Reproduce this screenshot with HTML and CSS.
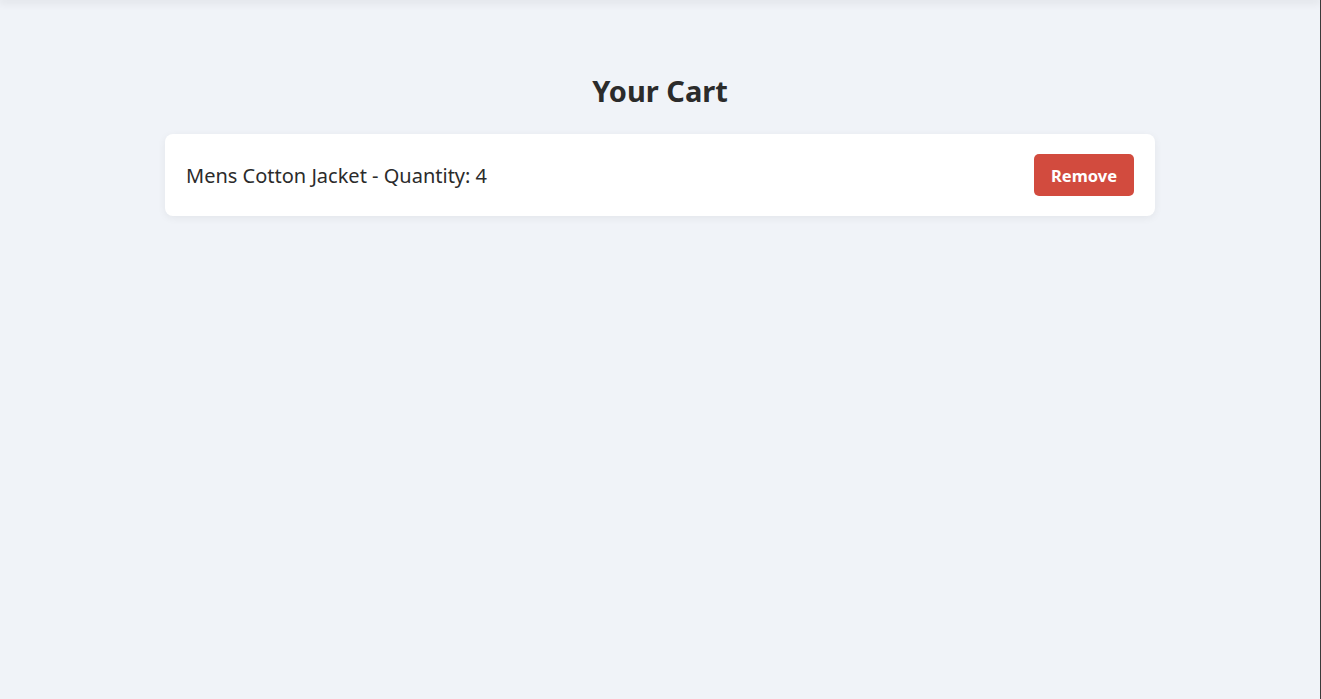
FILE: index.html
```html
<!DOCTYPE html>
<html lang="en">
<head>
<meta charset="utf-8">
<title>Your Cart</title>
<link rel="stylesheet" href="styles.css">
</head>
<body>
<header class="topbar"></header>
<main class="cart">
  <h1 class="cart-title">Your Cart</h1>
  <ul class="cart-list">
    <li class="cart-item">
      <span class="cart-item-text">Mens Cotton Jacket - Quantity: 4</span>
      <button class="btn-remove" type="button">Remove</button>
    </li>
  </ul>
</main>
</body>
</html>
```
FILE: styles.css
```css
* { box-sizing: border-box; }
html, body { height: 100%; }
body {
  margin: 0;
  background: #f0f3f8;
  font-family: "Noto Sans", "Open Sans", sans-serif;
  color: #2b2b2b;
  border-right: 1px solid #3a3a3a;
}
.topbar {
  height: 0;
  box-shadow: 0 0 10px 2px rgba(0,0,0,0.12);
}
.cart {
  max-width: 990px;
  margin: 0 auto;
  padding-top: 70px;
}
.cart-title {
  margin: 0 0 22px;
  text-align: center;
  font-size: 29px;
  font-weight: 700;
  line-height: 42px;
  color: #2b2b2b;
}
.cart-list { list-style: none; margin: 0; padding: 0; }
.cart-item {
  display: flex;
  align-items: center;
  justify-content: space-between;
  background: #fff;
  border-radius: 8px;
  padding: 20px 21px;
  box-shadow: 0 2px 8px rgba(0,0,0,0.06);
}
.cart-item-text { font-size: 20px; line-height: 28px; padding-top: 1px; }
.btn-remove {
  width: 100px;
  height: 42px;
  border: none;
  border-radius: 5px;
  background: #d24b3e;
  color: #fff;
  font-family: inherit;
  font-size: 16.5px;
  font-weight: 700;
  padding-top: 2px;
  cursor: pointer;
}
```
